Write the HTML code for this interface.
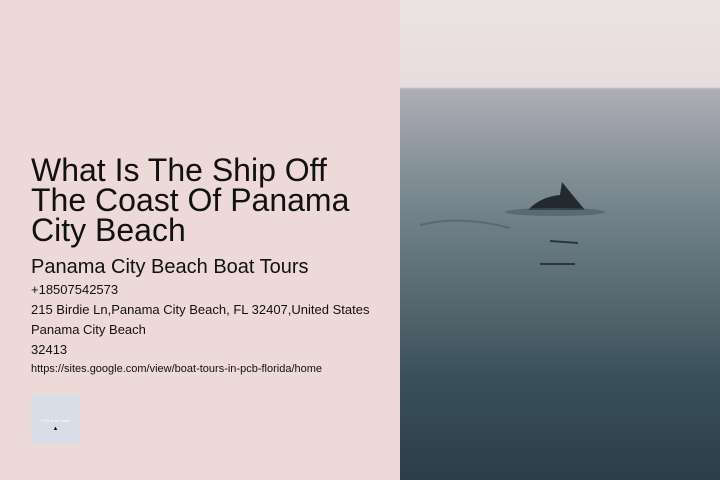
<!DOCTYPE html>
<html><head><style>
body{margin:0;width:720px;height:480px;overflow:hidden;background:#eed9d9;font-family:"Liberation Sans",sans-serif;color:#111;position:relative}
.t{position:absolute;left:31px;top:155px;font-size:32px;line-height:30px;width:345px}
.s{position:absolute;left:31px;top:256px;font-size:20px}
.l{position:absolute;left:31px;font-size:13px}
.img{position:absolute;left:400px;top:0;width:320px;height:480px;background:linear-gradient(#ece3e3 0,#e6dcdd 87px,#b0aeb6 89px,#8e979f 150px,#6f8088 220px,#546870 300px,#3a5058 380px,#2a3e47 480px)}
</style></head><body>
<div class="t">What Is The Ship Off The Coast Of Panama City Beach</div>
<div class="s">Panama City Beach Boat Tours</div>
<div class="l" style="top:282px">+18507542573</div>
<div class="l" style="top:302px">215 Birdie Ln,Panama City Beach, FL 32407,United States</div>
<div class="l" style="top:322px">Panama City Beach</div>
<div class="l" style="top:342px">32413</div>
<div class="l" style="top:363px;font-size:11px">https://sites.google.com/view/boat-tours-in-pcb-florida/home</div>
<div style="position:absolute;left:31px;top:395px;width:49px;height:49px;background:#d7dee8"><div style="font-size:4px;color:#fff;text-align:center;margin-top:23px">PCB Boat Tours</div><div style="font-size:6px;text-align:center;margin-top:3px">▲</div></div>
<div class="img">
<svg width="320" height="480" style="position:absolute;left:0;top:0">
<path d="M128 210 Q140 197 160 195 L162 182 Q170 192 185 210 Z" fill="#222a30"/>
<ellipse cx="155" cy="212" rx="50" ry="4" fill="#4a5a62" opacity=".6"/>
<path d="M20 225 Q60 215 110 228" stroke="#4c5c64" stroke-width="2" fill="none" opacity=".6"/>
<path d="M150 241 L178 243" stroke="#2a363c" stroke-width="2"/>
<path d="M140 264 L175 264" stroke="#2a363c" stroke-width="2"/>
</svg></div>
</body></html>
